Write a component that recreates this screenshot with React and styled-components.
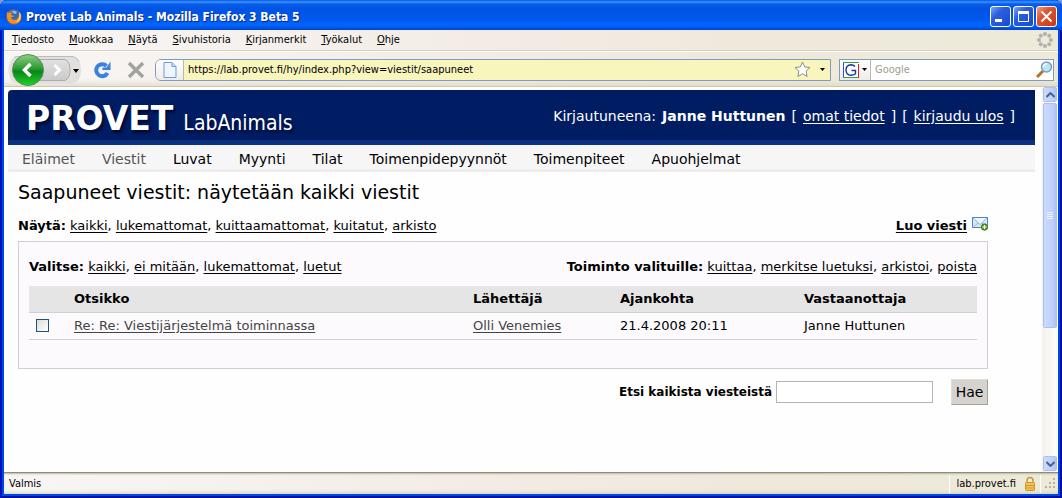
import React from 'react';
import styled, { createGlobalStyle, css } from 'styled-components';

const GlobalStyle = createGlobalStyle`
  *, *::before, *::after { box-sizing: border-box; }
  body { margin: 0; background: #7b9ce0; }
  button, input { font: inherit; color: inherit; }
`;

const ui = '"DejaVu Sans Condensed", "Noto Sans", sans-serif';
const web = '"DejaVu Sans", Verdana, sans-serif';

const Window = styled.div`
  display: flex;
  flex-direction: column;
  min-height: 100vh;
  padding: 0 4px 4px;
  border-radius: 7px 7px 0 0;
  background: #0046e8;
  box-shadow: inset 2px 0 #0013b8, inset -2px 0 #00129c, inset 0 -2px #00129c;
  font-family: ${ui};
  font-size: 11px;
  color: #000;
`;

const TitleBar = styled.header`
  display: flex;
  align-items: center;
  gap: 4px;
  height: 30px;
  margin: 0 -4px;
  padding: 3px 5px 0 6px;
  border-radius: 7px 7px 0 0;
  background: linear-gradient(#0058e6 0, #3a93ff 2px, #0a5de8 4px, #0054e3 9px, #0056e8 18px, #0066ff 25px, #005bf0 27px, #0042cc 30px);
`;

const WindowTitle = styled.h1`
  flex: 1;
  margin: 0;
  font-size: 12px;
  line-height: 16px;
  font-weight: bold;
  color: #fff;
  text-shadow: 1px 1px #0a2a8c;
`;

const CaptionButtons = styled.div`
  display: flex;
  gap: 2px;
`;

const CaptionButton = styled.button`
  width: 21px;
  height: 21px;
  padding: 0;
  border: 1px solid #fff;
  border-radius: 3px;
  background: ${p => p.$close
    ? 'linear-gradient(135deg, #f0a088, #e05530 35%, #c83a10)'
    : 'linear-gradient(135deg, #7ea4f4, #2b5fe0 35%, #1c48cc)'};
  svg { display: block; }
`;

const bar = css`
  display: flex;
  align-items: center;
  background: linear-gradient(90deg, #f8f6f5, #f3ece6 45%, #efe9dc 70%, #edead9);
`;

const MenuBar = styled.nav`
  ${bar}
  gap: 15px;
  height: 21px;
  padding: 0 4px 0 8px;
  border-bottom: 1px solid #d8cfc0;
`;

const MenuItem = styled.button`
  padding: 0;
  border: 0;
  background: none;
  line-height: 16px;
  &::first-letter { text-decoration: underline; }
`;

const Throbber = styled.svg`
  margin-left: auto;
`;

const Toolbar = styled.div`
  ${bar}
  height: 36px;
  padding: 1px 4px 0;
  border-top: 1px solid #fff;
  border-bottom: 1px solid #cdc6b2;
  box-shadow: inset 0 -6px 6px -4px #ded9c4;
`;

const IconButton = styled.button`
  display: flex;
  padding: 0;
  border: 0;
  background: none;
  margin-right: ${p => p.$gap || 0}px;
`;

const NavCluster = styled.div`
  display: flex;
  align-items: center;
  width: 74px;
  margin-right: 10px;
`;

const Field = styled.div`
  display: flex;
  align-items: center;
  height: 22px;
  border: 1px solid #7f9db9;
  background: ${p => p.$secure ? '#f8f5bd' : '#fff'};
  border-radius: ${p => p.$secure ? '6px 0 0 6px' : 0};
  overflow: hidden;
  ${p => p.$secure ? 'flex: 1; margin-right: 8px;' : 'width: 215px;'}
`;

const FieldBadge = styled.button`
  display: flex;
  align-items: center;
  justify-content: center;
  gap: 3px;
  flex: none;
  width: ${p => p.$width}px;
  height: 20px;
  padding: 0;
  border: 0;
  border-right: 1px solid #b8b8b0;
  background: linear-gradient(#fff, #eeece6);
`;

const FieldInput = styled.input`
  flex: 1;
  min-width: 0;
  padding: 0 4px;
  border: 0;
  outline: 0;
  background: none;
  line-height: 16px;
  &::placeholder { color: #a09c8c; opacity: 1; }
`;

const Viewport = styled.div`
  display: flex;
  flex: 1;
  background: #fefefe;
`;

const Page = styled.div`
  flex: 1;
  min-width: 0;
  padding: 3px 7px 0 4px;
  font-family: ${web};
  font-size: 13px;
`;

const Masthead = styled.header`
  display: flex;
  align-items: flex-start;
  justify-content: space-between;
  height: 55px;
  padding: 0 20px 0 18px;
  border-bottom: 5px solid #0c3180;
  border-radius: 4px 0 0 0;
  background: #001d63;
  color: #fff;
`;

const Brand = styled.div`
  display: flex;
  align-items: baseline;
  gap: 10px;
  line-height: 58px;
  text-shadow: 2px 3px 3px #000a38;
`;

const BrandName = styled.span`
  font-size: 33px;
  font-weight: bold;
`;

const BrandProduct = styled.span`
  font-family: ${ui};
  font-size: 21px;
`;

const Session = styled.div`
  display: flex;
  gap: 6px;
  padding-top: 16px;
  font-size: 14px;
  line-height: 20px;
`;

const Link = styled.a`
  color: ${p => p.$visited ? '#444' : 'inherit'};
  font-weight: ${p => p.$strong ? 'bold' : 'inherit'};
  text-decoration: underline;
  text-underline-offset: 2px;
`;

const SiteNav = styled.nav`
  display: flex;
  gap: 27px;
  height: 27px;
  padding: 0 14px;
  border-bottom: 3px solid #eeecec;
  background: #f7f6f6;
  font-size: 14px;
  line-height: 28px;
`;

const SiteNavLink = styled.a`
  color: ${p => p.$muted ? '#555' : '#000'};
  text-decoration: none;
`;

const Main = styled.main`
  padding: 8px 47px 0 10px;
`;

const Heading = styled.h2`
  margin: 0 0 12px;
  font-size: 19px;
  line-height: 24px;
  font-weight: normal;
`;

const Row = styled.div`
  display: flex;
  justify-content: space-between;
  line-height: 20px;
`;

const Compose = styled.div`
  display: flex;
  gap: 5px;
`;

const Panel = styled.section`
  height: 128px;
  margin-top: 5px;
  padding: 15px 10px 0;
  border: 1px solid #d0cfd2;
  background: #fcfafd;
`;

const MessageTable = styled.table`
  width: 100%;
  margin-top: 9px;
  border-collapse: collapse;
  table-layout: fixed;
  text-align: left;
  line-height: 20px;
  th, td { padding: 3px 0; border-bottom: 1px solid #d0cfd2; }
  th { height: 26px; padding-bottom: 2px; background: #e6e5e5; }
`;

const Col = styled.col`
  width: ${p => p.$width ? `${p.$width}px` : 'auto'};
`;

const Check = styled.input`
  appearance: none;
  display: block;
  width: 13px;
  height: 13px;
  margin: 0 0 0 7px;
  border: 1px solid #1c5180;
  background: linear-gradient(135deg, #dcdcd7, #fff);
`;

const SearchForm = styled.form`
  display: flex;
  justify-content: flex-end;
  align-items: center;
  margin-top: 10px;
`;

const SearchLabel = styled.label`
  margin-right: 4px;
  font-size: 12px;
  font-weight: bold;
  line-height: 20px;
`;

const SearchInput = styled.input`
  width: 157px;
  height: 22px;
  margin-right: 18px;
  border: 1px solid #b5b4b4;
  background: #fff;
`;

const SearchButton = styled.button`
  width: 37px;
  height: 26px;
  padding: 0;
  border: 1px solid;
  border-color: #e0ddd8 #a5a29e #a5a29e #e0ddd8;
  background: #d6d3ce;
  font-size: 14px;
`;

const ScrollTrack = styled.div`
  display: flex;
  flex-direction: column;
  width: 16px;
  padding: 0 1px 1px;
  background: linear-gradient(90deg, #f3f1ec, #fefefb);
`;

const scrollPart = css`
  display: flex;
  align-items: center;
  justify-content: center;
  width: 14px;
  border: 1px solid #fff;
  border-radius: 2px;
  outline: 1px solid #aebfe8;
  outline-offset: -1px;
  background: linear-gradient(90deg, #cbdaff, #bdd0fc 70%, #adc2f5);
`;

const ScrollButton = styled.button`
  ${scrollPart}
  height: 15px;
  padding: 0;
`;

const ScrollThumb = styled.div`
  ${scrollPart}
  height: 225px;
  margin: 1px 0 auto;
`;

const StatusBar = styled.footer`
  ${bar}
  height: 22px;
  padding: 0 2px 0 5px;
  border-top: 1px solid #8f8b7c;
  box-shadow: inset 0 2px 2px -1px #bdb7a4, inset 0 -4px 4px -3px #d5ceae;
  line-height: 16px;
`;

const StatusText = styled.span`
  flex: 1;
`;

const StatusHost = styled.div`
  display: flex;
  align-items: center;
  gap: 8px;
  height: 18px;
  padding: 0 4px 0 6px;
  margin-right: 4px;
  border-left: 1px solid #fff;
  border-right: 1px solid #fff;
`;

const Caret = () => (
  <svg width="5" height="3" viewBox="0 0 5 3" aria-hidden="true"><path d="M0 0h5L2.500 3z" fill="#000" /></svg>
);

const FirefoxLogo = () => (
  <svg width="16" height="16" viewBox="0 0 16 16" aria-hidden="true">
    <circle cx="8" cy="8" r="7.500" fill="#df6510" />
    <circle cx="8.500" cy="6.500" r="5.500" fill="#3469bd" />
    <path d="M6 2q4-1 5 2l-2 1-2-1z" fill="#8ac0ec" />
    <path d="M1 3l2 1q2-1 3 0L5 6l3 1-1 1-2 0q0 3 4 3 4-1 4-5l2-2q1 8-5 10-5 2-8-3Q0 7 1 3z" fill="#f4901c" />
    <path d="M13 3q3 3 1 8-2 3-5 3 5-3 4-11z" fill="#ffd24d" />
  </svg>
);

const BackForward = () => (
  <svg width="74" height="32" viewBox="0 0 74 32" aria-hidden="true">
    <defs>
      <linearGradient id="back" x2="0" y2="1">
        <stop offset="0" stopColor="#8fcf86" /><stop offset=".45" stopColor="#2c9a32" />
        <stop offset=".55" stopColor="#078817" /><stop offset="1" stopColor="#20d428" />
      </linearGradient>
      <linearGradient id="fwd" x2="0" y2="1">
        <stop offset="0" stopColor="#e2e1e1" /><stop offset="1" stopColor="#cbcaca" />
      </linearGradient>
    </defs>
    <path d="M8 2.500h57q8 2 8 13.500t-8 13.500H8Q.5 27 .5 16T8 2.500z" fill="#e2e0de" />
    <path d="M6 3.500Q8 2.500 10 2.500h55q4 1 6 5" fill="none" stroke="#bdbbb8" />
    <path d="M26 5.500h31q5 2 5 10.500t-5 10.500H26z" fill="url(#fwd)" stroke="#adabab" />
    <path d="M46.500 11l5 5-5 5" fill="none" stroke="#fff" strokeWidth="3" />
    <circle cx="20" cy="16" r="15.500" fill="url(#back)" stroke="#5d8a5b" />
    <path d="M22.500 10l-6 6 6 6" fill="none" stroke="#fff" strokeWidth="3.500" />
    <path d="M65 15h6l-3 4z" fill="#000" />
  </svg>
);

const ReloadIcon = () => (
  <svg width="20" height="20" viewBox="0 0 20 20" aria-hidden="true">
    <path d="M14.500 6A6 6 0 1 0 15.500 13" fill="none" stroke="#3b82df" strokeWidth="4" />
    <path d="M18.500 1.500v8.500h-8V7.500h4z" fill="#3b82df" />
  </svg>
);

const StopIcon = () => (
  <svg width="18" height="18" viewBox="0 0 18 18" aria-hidden="true">
    <path d="M2 2l14 14M16 2L2 16" stroke="#a3a29e" strokeWidth="3.500" />
  </svg>
);

const PageIcon = () => (
  <svg width="14" height="16" viewBox="0 0 14 16" aria-hidden="true">
    <path d="M1 .5h8l4 4v11H1z" fill="#eef5ff" stroke="#6f9bd8" />
    <path d="M9 .5v4h4" fill="#c3dafa" stroke="#6f9bd8" />
  </svg>
);

const StarIcon = () => (
  <svg width="17" height="17" viewBox="0 0 17 17" aria-hidden="true">
    <path d="M8.500 1l2.200 4.900 5.300.6-3.900 3.600 1 5.400-4.600-2.700-4.600 2.700 1-5.400L1 6.500l5.300-.6z" fill="#fff" stroke="#8d8d88" strokeLinejoin="round" />
  </svg>
);

const GoogleIcon = () => (
  <svg width="16" height="16" viewBox="0 0 16 16" aria-hidden="true">
    <rect width="16" height="16" fill="#fff" />
    <path d="M.5 16V0" stroke="#2a55c8" /><path d="M0 .5h16M0 15.500h16" stroke="#30a040" />
    <path d="M15.500 2v14" stroke="#e02020" />
    <path d="M12 4.500Q10.500 2.700 8 2.700 3 3 3 8t5 5.300q2.500 0 4.500-1.600V8.500H8.500" fill="none" stroke="#1c3a9c" strokeWidth="1.400" />
  </svg>
);

const SearchIcon = () => (
  <svg width="17" height="17" viewBox="0 0 17 17" aria-hidden="true">
    <path d="M1 16l6-6" stroke="#b8702c" strokeWidth="3" />
    <circle cx="10.500" cy="6" r="5" fill="#b9e2fb" stroke="#7c9cba" strokeWidth="1.500" />
    <path d="M7.500 6q0-3 3-3" fill="none" stroke="#fff" strokeWidth="1.500" />
  </svg>
);

const MailIcon = () => (
  <svg width="16" height="15" viewBox="0 0 16 15" aria-hidden="true">
    <path d="M.5 1v10.500h15V1z" fill="#d6e8fb" />
    <path d="M1 2l7 6.500L15 2z" fill="#eff6fe" />
    <path d="M1 2l7 6.500L15 2M1.500 11L6 7M14.500 11L10 7" fill="none" stroke="#8db3e6" />
    <path d="M.5 1.500h15v10H.5z" fill="none" stroke="#5580c6" />
    <circle cx="12.500" cy="11" r="3.500" fill="#62a033" />
    <circle cx="12.500" cy="11" r="3" fill="none" stroke="#457a25" />
    <path d="M10.500 11h4M12.500 9v4" stroke="#fff" />
  </svg>
);

const LockIcon = () => (
  <svg width="12" height="15" viewBox="0 0 12 15" aria-hidden="true">
    <path d="M3 7V4.500a3 3 0 0 1 6 0V7" fill="none" stroke="#c09a45" strokeWidth="1.500" />
    <rect x="1.500" y="6.500" width="9" height="8" rx="1" fill="#f2c352" stroke="#c8952e" />
    <path d="M2 9.500h8M2 12h8" stroke="#d39a25" />
  </svg>
);

const Chevron = ({ up }) => (
  <svg width="9" height="6" viewBox="0 0 9 6" aria-hidden="true">
    <path d={up ? 'M.5 5l4-4 4 4' : 'M.5 1l4 4 4-4'} fill="none" stroke="#4d6185" strokeWidth="2" />
  </svg>
);

const throbberDots = Array.from({ length: 8 }, (_, i) => i * Math.PI / 4);
const gripDots = [[8, 0], [4, 4], [8, 4], [0, 8], [4, 8], [8, 8]];

function LinkList({ label, items }) {
  return (
    <div>
      <strong>{label}</strong>{' '}
      {items.map((item, i) => (
        <React.Fragment key={item}>{i > 0 && ', '}<Link href="#">{item}</Link></React.Fragment>
      ))}
    </div>
  );
}

const menus = ['Tiedosto', 'Muokkaa', 'Näytä', 'Sivuhistoria', 'Kirjanmerkit', 'Työkalut', 'Ohje'];
const sections = ['Eläimet', 'Viestit', 'Luvat', 'Myynti', 'Tilat', 'Toimenpidepyynnöt', 'Toimenpiteet', 'Apuohjelmat'];

export default function App() {
  return (
    <Window>
      <GlobalStyle />
      <TitleBar>
        <FirefoxLogo />
        <WindowTitle>Provet Lab Animals - Mozilla Firefox 3 Beta 5</WindowTitle>
        <CaptionButtons>
          <CaptionButton aria-label="Pienennä">
            <svg width="19" height="19"><path d="M4 13.500h7" stroke="#fff" strokeWidth="3" /></svg>
          </CaptionButton>
          <CaptionButton aria-label="Suurenna">
            <svg width="19" height="19"><path d="M4.500 5.500h10v9h-10z" fill="none" stroke="#fff" /><path d="M4 5.500h11" stroke="#fff" strokeWidth="3" /></svg>
          </CaptionButton>
          <CaptionButton $close aria-label="Sulje">
            <svg width="19" height="19"><path d="M4.500 4.500l10 10M14.500 4.500l-10 10" stroke="#fff" strokeWidth="2" /></svg>
          </CaptionButton>
        </CaptionButtons>
      </TitleBar>

      <MenuBar>
        {menus.map(m => <MenuItem key={m}>{m}</MenuItem>)}
        <Throbber width="18" height="18" aria-hidden="true">
          {throbberDots.map(a => (
            <circle key={a} cx={9 + 6 * Math.cos(a)} cy={9 + 6 * Math.sin(a)} r="2" fill="#b3b1ad" />
          ))}
        </Throbber>
      </MenuBar>

      <Toolbar>
        <NavCluster>
          <IconButton aria-label="Edellinen ja seuraava"><BackForward /></IconButton>
        </NavCluster>
        <IconButton aria-label="Päivitä" $gap={15}><ReloadIcon /></IconButton>
        <IconButton aria-label="Pysäytä" $gap={10}><StopIcon /></IconButton>
        <Field $secure>
          <FieldBadge $width={28} aria-label="Sivuston tiedot"><PageIcon /></FieldBadge>
          <FieldInput aria-label="Osoite" defaultValue="https://lab.provet.fi/hy/index.php?view=viestit/saapuneet" />
          <IconButton aria-label="Lisää kirjanmerkki" $gap={9}><StarIcon /></IconButton>
          <IconButton aria-label="Osoitehistoria" $gap={5}><Caret /></IconButton>
        </Field>
        <Field>
          <FieldBadge $width={31} aria-label="Hakukone"><GoogleIcon /><Caret /></FieldBadge>
          <FieldInput aria-label="Haku" placeholder="Google" />
          <IconButton aria-label="Etsi"><SearchIcon /></IconButton>
        </Field>
      </Toolbar>

      <Viewport>
        <Page>
          <Masthead>
            <Brand><BrandName>PROVET</BrandName><BrandProduct>LabAnimals</BrandProduct></Brand>
            <Session>
              <span>Kirjautuneena:</span>
              <strong>Janne Huttunen</strong>
              <span>[</span><Link href="#">omat tiedot</Link><span>]</span>
              <span>[</span><Link href="#">kirjaudu ulos</Link><span>]</span>
            </Session>
          </Masthead>
          <SiteNav>
            {sections.map((s, i) => <SiteNavLink key={s} href="#" $muted={i < 2}>{s}</SiteNavLink>)}
          </SiteNav>
          <Main>
            <Heading>Saapuneet viestit: näytetään kaikki viestit</Heading>
            <Row>
              <LinkList label="Näytä:" items={['kaikki', 'lukemattomat', 'kuittaamattomat', 'kuitatut', 'arkisto']} />
              <Compose><Link href="#" $strong>Luo viesti</Link><MailIcon /></Compose>
            </Row>
            <Panel>
              <Row>
                <LinkList label="Valitse:" items={['kaikki', 'ei mitään', 'lukemattomat', 'luetut']} />
                <LinkList label="Toiminto valituille:" items={['kuittaa', 'merkitse luetuksi', 'arkistoi', 'poista']} />
              </Row>
              <MessageTable>
                <colgroup>
                  <Col $width={45} /><Col /><Col $width={147} /><Col $width={184} /><Col $width={173} />
                </colgroup>
                <thead>
                  <tr><th /><th>Otsikko</th><th>Lähettäjä</th><th>Ajankohta</th><th>Vastaanottaja</th></tr>
                </thead>
                <tbody>
                  <tr>
                    <td><Check type="checkbox" aria-label="Valitse viesti" /></td>
                    <td><Link href="#" $visited>Re: Re: Viestijärjestelmä toiminnassa</Link></td>
                    <td><Link href="#" $visited>Olli Venemies</Link></td>
                    <td>21.4.2008 20:11</td>
                    <td>Janne Huttunen</td>
                  </tr>
                </tbody>
              </MessageTable>
            </Panel>
            <SearchForm>
              <SearchLabel htmlFor="message-search">Etsi kaikista viesteistä</SearchLabel>
              <SearchInput id="message-search" type="text" />
              <SearchButton type="button">Hae</SearchButton>
            </SearchForm>
          </Main>
        </Page>
        <ScrollTrack>
          <ScrollButton aria-label="Vieritä ylös"><Chevron up /></ScrollButton>
          <ScrollThumb>
            <svg width="7" height="8" aria-hidden="true"><path d="M0 .5h6M0 2.500h6M0 4.500h6M0 6.500h6" stroke="#eef4ff" /></svg>
          </ScrollThumb>
          <ScrollButton aria-label="Vieritä alas"><Chevron /></ScrollButton>
        </ScrollTrack>
      </Viewport>

      <StatusBar>
        <StatusText>Valmis</StatusText>
        <StatusHost>lab.provet.fi<LockIcon /></StatusHost>
        <svg width="11" height="11" aria-hidden="true">
          {gripDots.map(([x, y]) => <rect key={`${x}-${y}`} x={x} y={y} width="2" height="2" fill="#b8b4a3" />)}
        </svg>
      </StatusBar>
    </Window>
  );
}
